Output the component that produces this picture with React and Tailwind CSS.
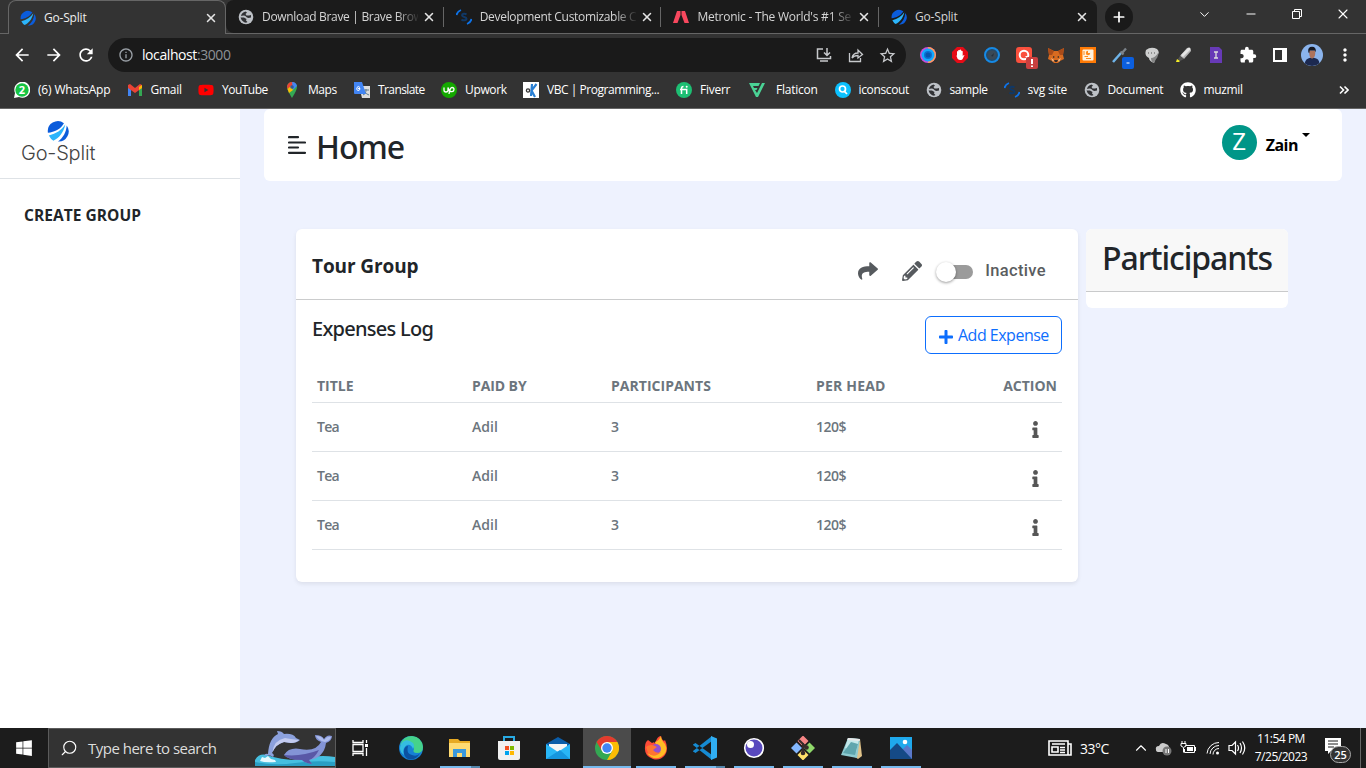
import { FaShare, FaPencilAlt, FaInfo, FaPlus, FaGithub, FaYoutube, FaWindows } from "react-icons/fa";
import { MdArrowBack, MdArrowForward, MdRefresh, MdInfoOutline, MdStarBorder, MdMoreVert, MdExtension } from "react-icons/md";
import { X, Plus, Search, ChevronDown, ChevronUp, Minus } from "lucide-react";

const UI = "font-['Open_Sans',sans-serif]";

function Logo({ className }) {
  return (
    <svg viewBox="0 0 24 24" className={className}>
      <path d="M1 14A11 11 0 0 1 18.500 3.500C15 10 8 13 1 14Z" fill="#0b5cdb" />
      <path d="M2 17C10 15 16 11 20 5C18 14 13 20 7 22.500Q4 21 2 17Z" fill="#2cb5fb" />
      <path d="M21.500 6A11 11 0 0 1 12 23.500C18 19 21 13 21.500 6Z" fill="#0b5cdb" />
    </svg>
  );
}

function Globe({ className }) {
  return (
    <svg viewBox="0 0 16 16" className={className}>
      <circle cx="8" cy="8" r="7.300" fill="#bdc1c6" />
      <path d="M3 7Q3.500 3.500 7.500 2.500L9 3.500L7.500 5L8.500 6.500H11L13 6V8.500L10.500 9L9 8.500L7 6.800Q5 6 3 7Z" fill="#303134" />
      <path d="M2.500 8.500H6L8.500 10L8 11.500L9.500 13L8 13.800Q4 13 2.500 8.500Z" fill="#303134" />
    </svg>
  );
}

function SvgSite({ className }) {
  return (
    <svg viewBox="0 0 16 16" className={className} fill="none">
      <path d="M0.500 6A7 7 0 0 1 5 1M15.500 10A7 7 0 0 1 11 15" stroke="#0d73ea" strokeWidth="1.800" />
      <path d="M10.500 5.500C9 4.200 6 4.500 6 6.300C6 8.500 10.500 7.400 10.500 9.700C10.500 11.700 7 11.800 5.500 10.400" stroke="#103866" strokeWidth="2" />
    </svg>
  );
}

function Metronic({ className }) {
  return (
    <svg viewBox="0 0 16 14" className={className} fill="#f8485e">
      <path d="M4 1H7.500V5L4.500 13H0Z" /><path d="M8.500 1H12L16 13H11.500L8.500 5Z" />
    </svg>
  );
}

const tabs = [
  ["Go-Split", Logo, "tracking-[-0.2px]"],
  ["Download Brave | Brave Brow", Globe, "tracking-[-0.320px]"],
  ["Development Customizable C", SvgSite, "tracking-[-0.310px]"],
  ["Metronic - The World's #1 Se", Metronic, "tracking-[-0.230px]"],
  ["Go-Split", Logo, "tracking-[-0.2px]"],
];

function Tabs() {
  return (
    <div className="flex h-[34px] border-b border-[#666] bg-[#333]">
      <div className="flex h-[34px] pl-2">
        {tabs.map(([name, Icon, tr], i) => (
          <div key={i} className={"relative flex items-center pl-3 " + (i === 0 ? "h-[34px] w-[218px] rounded-t-lg border border-b-0 border-[#666] bg-[#333] pl-[11px]" : i === 1 ? "h-[33px] w-[217.700px] rounded-tl-lg rounded-bl-lg bg-[#1b1b1b]" : i === 4 ? "h-[33px] w-[218px] rounded-tr-lg bg-[#1b1b1b]" : "h-[33px] w-[217.700px] bg-[#1b1b1b]")}>
            <Icon className="size-4 shrink-0" />
            <div className={"ml-2 w-[156px] shrink-0 text-[12px] leading-[18px] whitespace-nowrap " + tr + " " + (i === 0 ? "text-[#eee]" : "text-[#d5d5d5]") + (i > 0 && i < 4 ? " [mask-image:linear-gradient(to_right,black_134px,transparent_158px)]" : "")}>{name}</div>
            <X className="ml-1 size-[14px] shrink-0 text-[#e4e4e4]" strokeWidth={2.6} />
            {i > 0 && i < 4 && <span className="absolute top-[7px] right-0 h-5 w-px bg-[#666]" />}
          </div>
        ))}
      </div>
      <div className="mt-[3px] ml-2 flex size-7 items-center justify-center rounded-full bg-[#1a1a1a]"><Plus className="size-4 text-white" strokeWidth={2.6} /></div>
      <div className="ml-auto flex h-7 items-center text-white">
        <ChevronDown className="size-[15px]" strokeWidth={1.6} />
        <Minus className="ml-[32px] size-[14px]" strokeWidth={1.7} />
        <svg viewBox="0 0 12 12" className="ml-[33px] size-3" fill="none" stroke="white"><path d="M1.500 3.500H8.500V10.500H1.500ZM3.500 3.500V1.500H10.500V8.500H8.500" /></svg>
        <X className="mr-[15px] ml-[32px] size-4" strokeWidth={1.6} />
      </div>
    </div>
  );
}

function Extensions() {
  return (
    <div className="ml-[14px] flex items-center gap-4">
      <svg viewBox="0 0 16 16" className="size-4"><circle cx="8" cy="8" r="8" fill="#c94fd8" /><path d="M8 0A8 8 0 0 1 8 16" fill="#ff9c5b" /><circle cx="8" cy="8" r="6.500" fill="#12a8ff" /><circle cx="8" cy="8" r="4" fill="#0b6fd0" /><circle cx="8" cy="8" r="2.500" fill="#0754ac" /></svg>
      <svg viewBox="0 0 16 16" className="size-4"><path d="M5 0H11L16 5V11L11 16H5L0 11V5Z" fill="#e60b16" /><path d="M5 8V4.500Q5.700 3.700 6.200 4.500V3.300Q7 2.500 7.600 3.300V3Q8.500 2.200 9.200 3V4Q10 3.400 10.700 4.200V9Q12 7.500 12.500 8L10.500 12.200Q8 14 5.700 12L4.500 9Z" fill="white" /></svg>
      <svg viewBox="0 0 16 16" className="size-4"><circle cx="8" cy="8" r="7" fill="#254a69" stroke="#168ae6" strokeWidth="2" /><circle cx="8" cy="8" r="4.500" fill="#3a4957" /><path d="M7 9L10 6L9 9.500Z" fill="#24303b" /></svg>
      <svg viewBox="0 0 22 22" className="-mr-[6px] mt-[6px] size-[22px]"><rect width="16" height="16" rx="3" fill="#fa503d" /><circle cx="8" cy="8" r="4.300" fill="none" stroke="white" strokeWidth="2" /><path d="M9 9H12V12Z" fill="white" /><rect x="10" y="10" width="12" height="12" rx="2" fill="#c94040" /><path d="M16 12V17M16 18.500V20" stroke="white" strokeWidth="2" /></svg>
      <svg viewBox="0 0 16 16" className="size-4"><path d="M0 1L6 4H10L16 1L15 8L16 12L12 14L10 16H6L4 14L0 12L1 8Z" fill="#d86b20" /><path d="M0 1L6 4L4 8L1 8ZM16 1L10 4L12 8L15 8Z" fill="#a94b19" /><path d="M5 9L7 10L5 11ZM11 9L9 10L11 11ZM6 13H10L9 15H7Z" fill="#352d2a" /><path d="M3 11L6 13L5 15ZM13 11L10 13L11 15Z" fill="#efbd8d" /></svg>
      <svg viewBox="0 0 16 16" className="size-4"><rect width="16" height="16" fill="#ff7a05" /><rect x="2.500" y="2.500" width="11" height="11" rx="1" fill="#fff3df" /><circle cx="8" cy="6" r="2.200" fill="#ff8b1b" /><path d="M8 6V3.500H10.500V6Z" fill="#fff3df" /><path d="M4.500 9.500H8M6 11.500H11M4 4V8" stroke="#ff8b1b" /></svg>
      <svg viewBox="0 0 22 22" className="-mr-[6px] mt-[6px] size-[22px]"><path d="M1 15L9 6" stroke="#6fb4e9" strokeWidth="2.500" /><path d="M8.500 4.500L11.500 7.500M10 6L14 1.500" stroke="#7c838a" strokeWidth="2.300" /><rect x="10" y="10" width="12" height="12" rx="2" fill="#0b5fe0" /><path d="M14.500 16H17.500" stroke="white" /></svg>
      <svg viewBox="0 0 16 16" className="size-4"><path d="M2 3Q7-1 13 2Q17 6 12 10L10 16Q5 14 5 11Q0 9 2 3Z" fill="#cfd0d0" /><path d="M7 11Q11 11 14 6Q14 11 12 12L10 16Q7 15 7 11Z" fill="#858686" /><path d="M4 6H5M7 6H8M10 6H11" stroke="#555" /></svg>
      <svg viewBox="0 0 16 16" className="size-4"><path d="M11 1Q15-1 15 4L8 12L4 9Z" fill="#b8b8b8" /><path d="M12 1Q15 0 14 3L7 10L5 8Z" fill="#e6e6e6" /><path d="M4 9L8 12L4 14L2 12Z" fill="#555" /><path d="M0 15L1 12L4 14L3 15Z" fill="#f6ef28" /></svg>
      <svg viewBox="0 0 16 16" className="size-4"><path d="M2 0H11L14 3V16H2Z" fill="#673ab7" /><path d="M6 5H10M8 5V11M6 11H10" stroke="#ddd" strokeWidth="1.300" /></svg>
      <MdExtension className="-mx-px size-[18px] text-white" />
      <svg viewBox="0 0 16 16" className="size-4"><path d="M1 1H15V15H1ZM3 3V13H10V3Z" fill="white" fillRule="evenodd" /></svg>
      <svg viewBox="0 0 24 24" className="-mx-[3px] size-[22px]"><circle cx="12" cy="12" r="12" fill="#8bb4ed" /><path d="M4 21Q5 16 10 15H14Q20 16 20 21Q17 24 12 24Q7 24 4 21Z" fill="#1c2950" /><path d="M9 7H15.500V11Q15 15.500 12 16Q9.500 15.500 9 11Z" fill="#ad735d" /><path d="M8 9Q7 3 12 3Q17 3 16 9L15 7L9.500 7L9 10Z" fill="#151823" /></svg>
      <MdMoreVert className="-ml-px size-5 text-white" />
    </div>
  );
}

function Toolbar() {
  return (
    <div className="flex h-[42px] items-center bg-[#333] pl-3 text-white">
      <MdArrowBack className="size-5" /><MdArrowForward className="ml-3 size-5" /><MdRefresh className="ml-3 size-5" />
      <div className="ml-[12px] flex h-[34px] w-[798px] shrink-0 items-center rounded-full bg-[#1a1a1a] pr-[9px] pl-[10px]">
        <MdInfoOutline className="size-4 text-[#9aa0a6]" />
        <div className="ml-2 pb-[2px] text-[14px] tracking-[-0.420px]">localhost<span className="text-[#8e9297]">:3000</span></div>
        <svg viewBox="0 0 16 16" className="ml-auto size-4" fill="none" stroke="#c7c9cc" strokeWidth="1.500"><path d="M7 2H1.500V11.500H14.500V9M11 1V8M8 5.500L11 8.500L14 5.500M4 14H12" /></svg>
        <svg viewBox="0 0 16 16" className="ml-4 size-4" fill="none" stroke="#c7c9cc" strokeWidth="1.300"><path d="M1.500 6V14.500H12.500V11M4 11Q5 6 10 6V3L14.500 7.500L10 11V8.500Q6 8.500 4 11Z" /></svg>
        <MdStarBorder className="ml-[14px] size-[19px] text-[#c7c9cc]" />
      </div>
      <Extensions />
    </div>
  );
}

function MapsPin({ className }) {
  return <svg viewBox="0 0 16 16" className={className}><path d="M8 0A5 5 0 0 0 3 5Q3 8 8 16Q13 8 13 5A5 5 0 0 0 8 0Z" fill="#34a853" /><path d="M3.500 7L11.500 1.500A5 5 0 0 0 4 2Q2.500 4 3.500 7Z" fill="#ea4335" /><path d="M8 0Q12 0 13 4L9 8Z" fill="#4285f4" /><path d="M3.500 7L7 4L9 8L5 11Z" fill="#fbbc04" /><circle cx="8" cy="5" r="1.800" fill="#305b9a" /></svg>;
}

const marks = [
  ["(6) WhatsApp", "w-[112.500px]", <svg viewBox="0 0 16 16" className="size-4"><path d="M0 16L1 11A8 8 0 1 1 5 15Z" fill="white" /><circle cx="8" cy="8" r="6.700" fill="#16c443" /><text x="8" y="12" textAnchor="middle" className="font-['Open_Sans'] text-[11px] font-bold" fill="white">2</text></svg>, "tracking-[-0.170px]"],
  ["Gmail", "w-[71.500px]", <svg viewBox="0 0 16 16" className="size-4"><path d="M1 14V4L4 6V14Z" fill="#4285f4" /><path d="M12 6L15 4V14H12Z" fill="#34a853" /><path d="M1 3L3 2L8 6L13 2L15 3V6L8 11L1 6Z" fill="#ea4335" /><path d="M12 5V8L15 6V3Z" fill="#fbbc04" /></svg>, "tracking-[-0.250px]"],
  ["YouTube", "w-[86px]", <FaYoutube className="size-4 text-[#f00]" />, "tracking-[-0.520px]"],
  ["Maps", "w-[70px]", <MapsPin className="size-4" />, "tracking-[-0.450px]"],
  ["Translate", "w-[87px]", <svg viewBox="0 0 16 16" className="size-4"><path d="M5 4H16V16H8Z" fill="#ddd" /><path d="M9 8H15M12 7V9Q12 12 9 13M11 10Q12 12 15 13" stroke="#607d8b" fill="none" /><path d="M0 0H8L12 12H1Q0 12 0 11Z" fill="#4285f4" /><path d="M6 5.500Q4 3.500 3 5.500Q2 8 4 8.500Q6 8.500 6 6.500H4" stroke="white" fill="none" /></svg>, "tracking-[-0.6px]"],
  ["Upwork", "w-[82px]", <svg viewBox="0 0 16 16" className="size-4"><circle cx="8" cy="8" r="8" fill="#14a800" /><path d="M3 5.500V8Q3 10 5 10Q7 10 7 8V5.500Q8 10 11 9.700Q13 9.300 13 7.500Q13 5.500 11 5.500Q9 5.500 8 12" fill="none" stroke="white" strokeWidth="1.300" /></svg>, "tracking-[-0.350px]"],
  ["VBC | Programming...", "w-[153px]", <svg viewBox="0 0 16 16" className="size-4"><path d="M0 0H16V16H0Z" fill="white" /><path d="M9 2L8 14M13.500 2L8.500 8.500L12 15" fill="none" stroke="#287fd4" strokeWidth="2.200" /><circle cx="5" cy="8.500" r="1.600" fill="none" stroke="#333" strokeWidth="1.300" /></svg>, "tracking-[-0.460px]"],
  ["Fiverr", "w-[73px]", <svg viewBox="0 0 16 16" className="size-4"><circle cx="8" cy="8" r="8" fill="#1dbf73" /><path d="M5.500 12V6.500Q5.500 4.500 7.500 4.500M4 7.500H10.700V12" fill="none" stroke="white" strokeWidth="1.500" /><circle cx="10.700" cy="4.700" r="1" fill="white" /></svg>, "tracking-[-0.250px]"],
  ["Flaticon", "w-[85.500px]", <svg viewBox="0 0 16 16" className="mr-[3px] size-4"><path d="M0 1H11L9.500 4H4L5 6H8.500L7.500 8H6L8 11L13 1H16L9 15H7Z" fill="#4ad295" /></svg>, "tracking-[-0.230px]"],
  ["iconscout", "w-[91px]", <svg viewBox="0 0 16 16" className="size-4"><circle cx="8" cy="8" r="8" fill="#0bc1ff" /><circle cx="7.500" cy="7" r="3" fill="none" stroke="white" strokeWidth="1.700" /><path d="M9.500 9.500L12 12" stroke="white" strokeWidth="1.700" /></svg>, "tracking-[-0.350px]"],
  ["sample", "w-[78px]", <Globe className="size-4" />, "tracking-[-0.4px]"],
  ["svg site", "w-[80px]", <SvgSite className="size-4" />, "tracking-[-0.2px]"],
  ["Document", "w-[96px]", <Globe className="size-4" />, "tracking-[-0.350px]"],
  ["muzmil", "w-[80px]", <FaGithub className="size-4 text-white" />, "tracking-[-0.350px]"],
];

function Bookmarks() {
  return (
    <div className="flex h-[33px] items-center border-b border-[#666] bg-[#333] pb-[5px] pl-[14px] text-[12px] text-white">
      {marks.map(([t, w, icon, tr]) => <div key={t} className={"flex shrink-0 items-center gap-2 whitespace-nowrap " + w}>{icon}<span className={tr}>{t}</span></div>)}
      <svg viewBox="0 0 10 10" className="mr-[17px] ml-auto size-[10px]" fill="none" stroke="white" strokeWidth="1.600"><path d="M1 1.500L4.500 5L1 8.500M5.500 1.500L9 5L5.500 8.500" /></svg>
    </div>
  );
}

const cols = "grid grid-cols-[155px_139px_205px_1fr_74px] px-[5px]";

function Page() {
  return (
    <div className="flex h-[619px] bg-[#eef2fe] text-[#212529]">
      <aside className="w-60 shrink-0 bg-white">
        <div className="h-[70px] border-b border-[#dee2e6] pt-[11px] pl-[21px]">
          <Logo className="ml-[26px] size-[22px]" />
          <div className="-mt-px font-['Inter',sans-serif] text-[20px] leading-6 font-light tracking-[-0.200px] text-[#444]">Go-Split</div>
        </div>
        <div className="mt-6 pl-6 text-[15.500px] leading-6 font-bold tracking-[0.050px]">CREATE GROUP</div>
      </aside>
      <div className="flex-1 px-6">
        <header className="flex h-[72px] items-start rounded-md bg-white pr-8 pl-6">
          <svg viewBox="0 0 18 18" className="mt-[27px] size-[18px] shrink-0" stroke="#212529" strokeWidth="2.200" strokeLinecap="round"><path d="M1 1.200H10M1 6.500H17M1 11.500H10M1 16.800H17" /></svg>
          <h1 className="ml-[10px] pt-[14px] font-['Noto_Sans',sans-serif] text-[32px] leading-12 font-medium tracking-[-1px]">Home</h1>
          <div className="mt-4 ml-auto flex size-[35px] items-center justify-center rounded-full bg-[#009688] pt-px font-['Roboto',sans-serif] text-[23px] text-white">Z</div>
          <div className="mt-[24px] ml-2 pl-px text-[16px] leading-6 font-bold tracking-[-0.500px] text-black">Zain</div>
          <div className="mt-6 ml-1 border-x-4 border-t-4 border-x-transparent border-t-black" />
        </header>
        <main className="mt-12 flex items-start gap-2 pl-8">
          <section className="h-[353px] w-[782px] rounded-md bg-white shadow-[0_2px_4px_rgba(0,0,0,0.08)]">
            <div className="flex h-[71px] items-center border-b border-[#cbcccd] pr-8 pl-4">
              <h2 className="mt-1 text-[19px] leading-6 font-bold tracking-[-0.100px]">Tour Group</h2>
              <FaShare className="mt-[13px] ml-auto size-5 text-[#565a5e]" />
              <FaPencilAlt className="mt-[13px] ml-6 size-5 text-[#565a5e]" />
              <div className="mt-[15px] ml-4 flex h-[14px] w-[35px] items-center rounded-full bg-[#9b9b9b]"><span className="-ml-0.5 size-5 rounded-full bg-white shadow-[0_1px_3px_rgba(0,0,0,0.4)]" /></div>
              <div className="mt-[15px] ml-3 font-['Roboto',sans-serif] text-[16.500px] font-medium tracking-[0.350px] text-[#5a5d60]">Inactive</div>
            </div>
            <div className="px-4 pt-4">
              <div className="flex h-[38px] items-start justify-between">
                <h3 className="pt-px font-['Noto_Sans',sans-serif] text-[20px] leading-6 font-medium tracking-[-0.720px]">Expenses Log</h3>
                <button className="flex h-[38px] w-[137px] items-center rounded-md border border-[#0d6efd] pl-3 text-[16px] text-[#0d6efd]"><FaPlus className="mt-1 size-4" /><span className="ml-1 tracking-[-0.500px] whitespace-nowrap">Add Expense</span></button>
              </div>
              <div className={"mt-[15px] h-[34px] items-center border-b border-[#dee2e6] text-[14px] font-bold text-[#6c757d] " + cols}>
                <span>TITLE</span><span className="tracking-[-0.1px]">PAID BY</span><span className="tracking-[0.020px]">PARTICIPANTS</span><span className="tracking-[0.2px]">PER HEAD</span><span className="text-right">ACTION</span>
              </div>
              {[0, 1, 2].map((i) => (
                <div key={i} className={"h-[49px] items-center border-b border-[#dee2e6] pb-[2px] text-[14px] font-semibold text-[#6c757d] " + cols}>
                  <span className="tracking-[-0.7px]">Tea</span><span>Adil</span><span>3</span><span className="tracking-[-0.5px]">120$</span><FaInfo className="mt-[6px] mr-[13px] size-[17px] justify-self-end text-[#565656]" />
                </div>
              ))}
            </div>
          </section>
          <section className="h-[79px] w-[202px] overflow-hidden rounded-md bg-white">
            <div className="h-[63px] border-b border-[#c9cacb] bg-[#f8f8f8] pt-[5px] pl-4 font-['Noto_Sans',sans-serif] text-[32px] leading-12 font-medium tracking-[-1.050px]">Participants</div>
          </section>
        </main>
      </div>
    </div>
  );
}

function Dolphins() {
  return (
    <svg viewBox="0 0 80 36" className="h-[36px] w-20">
      <path d="M0 36V30Q4 23 12 25Q25 30 44 30Q62 24 80 27V36Z" fill="#46bfe0" />
      <path d="M0 36V32Q20 36 40 33Q60 30 80 32V36Z" fill="#2a9fc4" />
      <path d="M5 31L7 27L10 28L13 26L16 29L20 30L21 32Q10 33 5 31Z" fill="#e6f9ff" />
      <path d="M13 24Q14 8 23 4L22 1Q27 1 29 4Q38 3 41 8L45 10Q42 13 36 13L29 12Q21 14 17 23Q20 25 18 27Q15 24 9 26Q10 23 13 24Z" fill="#8ca1dd" />
      <path d="M30 8Q35 9 44 10Q41 13 36 13L29 12Q21 14 17.500 22Q19 10 30 8Z" fill="#c3cbef" />
      <path d="M29 25Q34 17 45 19Q61 22 66 12Q60 10 60 5Q67 5 69 9Q72 4 77 6Q77 11 71 13Q69 28 54 30L57 34Q50 33 47 30Q33 30 29 25Z" fill="#8394d6" />
      <path d="M29 25Q46 27 64 20Q59 29 54 30L57 34Q50 33 47 30Q33 30 29 25Z" fill="#5958a6" />
      <path d="M61 6Q67 6 69 10Q72 6 76 7Q75 11 70 12Q64 11 61 6Z" fill="#aebcec" />
    </svg>
  );
}

const apps = [
  <svg viewBox="0 0 24 24"><circle cx="12" cy="12" r="12" fill="#1681d5" /><path d="M1 9Q4 0 13 0Q23 1 24 11Q24 17 18 17Q13 17 15 13Q15 8 9 7Q4 7 1 9Z" fill="#45d28b" /><path d="M2 8Q7 1 14 7Q16 10 14 13Q12 8 8 9Q3 12 5 19Q-1 15 2 8Z" fill="#35bde1" /><path d="M9 10Q7 18 13 19Q18 21 21 17Q17 25 9 23Q4 20 5 14Q6 10 9 10Z" fill="#0b51a1" /></svg>,
  <svg viewBox="0 0 24 24"><path d="M1 3H10L12 5H22V21H1Z" fill="#e7aa23" /><path d="M1 7H22V21H1Z" fill="#ffdb72" /><path d="M5 21V13H18V21H14V17H9V21Z" fill="#3a99dc" /></svg>,
  <svg viewBox="0 0 24 24"><path d="M7 6V1H17V6" fill="none" stroke="#28aae3" strokeWidth="2" /><path d="M1 5H23V22Q23 24 21 24H3Q1 24 1 22Z" fill="#f1f1f1" /><path d="M8 10H12V14H8Z" fill="#f25022" /><path d="M13 10H17V14H13Z" fill="#7fba00" /><path d="M8 15H12V19H8Z" fill="#00a4ef" /><path d="M13 15H17V19H13Z" fill="#ffb900" /></svg>,
  <svg viewBox="0 0 24 24"><path d="M0 8L12 1L24 8V23H0Z" fill="#0b5da9" /><path d="M3 8H21V16H3Z" fill="#f5f5f5" /><path d="M0 8L12 16L24 8V23H0Z" fill="#29b6f6" /><path d="M0 23L14 14L24 23Z" fill="#1696df" /></svg>,
  <svg viewBox="0 0 24 24"><circle cx="12" cy="12" r="12" fill="#34a853" /><path d="M1.600 6A12 12 0 0 1 22.400 6H12L7 15Z" fill="#e33b2e" /><path d="M12 6H22.400A12 12 0 0 1 12 24L17.200 15Z" fill="#fbbc04" /><circle cx="12" cy="12" r="6" fill="white" /><circle cx="12" cy="12" r="4.700" fill="#4285f4" /></svg>,
  <svg viewBox="0 0 24 24"><path d="M4 4L8 7Q11 5 11 8Q13 0 17 0Q17 3 20 5L21 4Q25 13 21 19Q16 25 9 23Q0 20 1 11Q1 6 4 4Z" fill="#ff4b37" /><path d="M11 6Q15 5 17 0Q17 4 21 8Q25 16 17 21Q9 25 3 17Q10 21 14 14Z" fill="#ffbd24" /><circle cx="12" cy="13" r="5" fill="#9350cf" /><path d="M2 11Q7 7 13 11L9 14Q12 18 17 16Q10 23 4 17Z" fill="#ff7432" /></svg>,
  <svg viewBox="0 0 24 24"><path d="M0 8.500L2.500 7L19 19V24L0 9ZM0 15.500L2.500 17L19 5V0L0 15Z" fill="#168bd2" /><path d="M18 0L24 2.500V21.500L18 24Z" fill="#30aef2" /></svg>,
  <svg viewBox="0 0 24 24"><circle cx="12" cy="12" r="9.300" fill="#5849be" stroke="#fff" strokeWidth="1.600" /><circle cx="8.500" cy="8.500" r="3.500" fill="#fff" /></svg>,
  <svg viewBox="0 0 24 24"><path d="M12 -0.500L17.500 5L12 10.500L6.500 5Z" fill="#f58585" /><path d="M5.500 6.500L11 12L5.500 17.500L0 12Z" fill="#84b7ff" /><path d="M18.500 6.500L24 12L18.500 17.500L13 12Z" fill="#8fd96a" /><path d="M12 13.500L17.500 19L12 24.500L6.500 19Z" fill="#ffe16a" /><path d="M8 4L15 11M12 7V17" stroke="#372b2a" strokeWidth="2" /><circle cx="15.500" cy="11.500" r="2.300" fill="#372b2a" /><circle cx="12" cy="17" r="2.300" fill="#372b2a" /></svg>,
  <svg viewBox="0 0 24 24"><path d="M20 3L22 20L18 23L15 21Z" fill="#e0c38a" /><path d="M8 2L20 3L17 22L1 19Z" fill="#8ecbd1" /><path d="M8 2L19 3L16 16L5 12Z" fill="#c3e8ea" /><path d="M11 6L18 8L15 19L3 17Z" fill="#5fa6ae" /><path d="M8 2L20 3L19.700 5L7.300 4Z" fill="#e8e8e8" /></svg>,
  <svg viewBox="0 0 24 24"><path d="M1 1H23V23H1Z" fill="#1fa9ed" /><path d="M13 14L18 9L23 14V23H13Z" fill="#5a78c9" /><path d="M1 14L8 7L23 23H1Z" fill="#154a86" /><circle cx="16" cy="6" r="2.300" fill="white" /></svg>,
];

function Indicator({ index }) {
  if (index === 1 || index === 6) {
    return <div className="mt-auto flex h-0.5 w-10"><span className="w-[31px] bg-[#76b9ed]" /><span className="w-[9px] bg-[#5486ab]" /></div>;
  }
  if (index === 4) return <div className="mt-auto h-0.5 w-12 bg-[#76b9ed]" />;
  return index > 4 ? <div className="mt-auto h-0.5 w-10 bg-[#76b9ed]" /> : null;
}

function Taskbar() {
  return (
    <div className="flex h-10 items-center bg-[#1c1c1c] text-white">
      <div className="flex w-12 shrink-0 justify-center"><FaWindows className="size-[18px]" /></div>
      <div className="flex h-10 w-[288px] shrink-0 items-center border border-[#5b5b5b] bg-[#333] pl-[11px]">
        <Search className="size-[18px] -scale-x-100" strokeWidth={1.5} />
        <span className="ml-[10px] text-[15px] tracking-[-0.510px] whitespace-nowrap text-[#ddd]">Type here to search</span>
        <div className="ml-auto"><Dolphins /></div>
      </div>
      <svg viewBox="0 0 16 16" className="mx-4 size-4 shrink-0" fill="none" stroke="white" strokeWidth="1.300"><path d="M1 0V2.500H11V0M1 4.500H11V11.500H1ZM1 16V13.500H11V16M14.500 0V3M14.500 8V16" /><path d="M13 4H16V7H13Z" fill="white" stroke="none" /></svg>
      <div className="ml-[3px] flex h-10 gap-px">
        {apps.map((a, i) => <div key={i} className={"flex h-10 w-12 flex-col items-center " + (i === 4 ? "bg-[#4b4b4b]" : "")}><div className="mt-2 size-6">{a}</div><Indicator index={i} /></div>)}
      </div>
      <div className="ml-auto flex items-center">
        <svg viewBox="0 0 24 16" className="h-4 w-6" fill="none" stroke="white" strokeWidth="1.600"><path d="M1 1H20V15H1ZM20 4H23V15H18M4 4H17M4 7H10V12H4ZM12 7.500H17M12 10H17M12 12.500H17" /></svg>
        <span className="ml-2 w-[31px] text-[14px] tracking-[-0.500px] whitespace-nowrap">33°C</span>
        <ChevronUp className="ml-[21px] size-[18px]" strokeWidth={1.500} />
        <svg viewBox="0 0 17 16" className="ml-[5px] h-4 w-[17px]"><path d="M1 10Q0 6 4 6Q6 1 11 4Q15 5 14 10V12H4Q1 12 1 10Z" fill="#ccc" /><circle cx="12" cy="11" r="4.500" fill="#777" /><path d="M11 9V13M13.500 9V13" stroke="white" /></svg>
        <svg viewBox="0 0 16 14" className="ml-2 h-[14px] w-4" fill="none" stroke="white"><path d="M5.500 4.500H14.500V11.500H4.500V8M1 2.500H6V5Q3.500 8 1 5ZM2 0V2M5 0V2M3.500 7V11.500" /><path d="M7 6H13V10H7ZM15 6H16V10H15Z" fill="white" stroke="none" /></svg>
        <svg viewBox="0 0 14 14" className="ml-[10px] size-[14px]" fill="none" stroke="white"><path d="M1 12.500A12 12 0 0 1 13 1.500M4 13A9 9 0 0 1 13 4.500M7 13.500A6 6 0 0 1 13 7.500" /><circle cx="11.500" cy="12" r="1.500" fill="white" stroke="none" /></svg>
        <svg viewBox="0 0 18 16" className="ml-2 h-4 w-[18px]" fill="none" stroke="white" strokeWidth="1.200"><path d="M1 5.500H4L7.500 2V14L4 10.500H1ZM9.500 5Q11.500 8 9.500 11M12 3Q15 8 12 13M14.500 1.500Q19 8 14.500 14.500" /></svg>
        <div className="ml-[8px] flex w-[54px] flex-col items-center text-[12px] leading-[18px] tracking-[-0.480px] whitespace-nowrap"><span>11:54 PM</span><span>7/25/2023</span></div>
        <svg viewBox="0 0 27 26" className="mt-[5px] ml-[16px] h-[26px] w-[27px]"><path d="M1 0H17V13H7L4 16V13H1Z" fill="white" /><path d="M4 3H14M4 6H14M4 9H10" stroke="#1c1c1c" /><rect x="6.500" y="8.500" width="20" height="16" rx="8" fill="#333" stroke="#aaa" /><text x="16.500" y="20.500" textAnchor="middle" className="font-['Open_Sans'] text-[11px] font-semibold" fill="white">25</text></svg>
        <span className="ml-[9px] h-10 w-px bg-[#666]" /><span className="w-[5px]" />
      </div>
    </div>
  );
}

export default function App() {
  return <div className={"h-[768px] w-[1366px] overflow-hidden " + UI}><Tabs /><Toolbar /><Bookmarks /><Page /><Taskbar /></div>;
}
